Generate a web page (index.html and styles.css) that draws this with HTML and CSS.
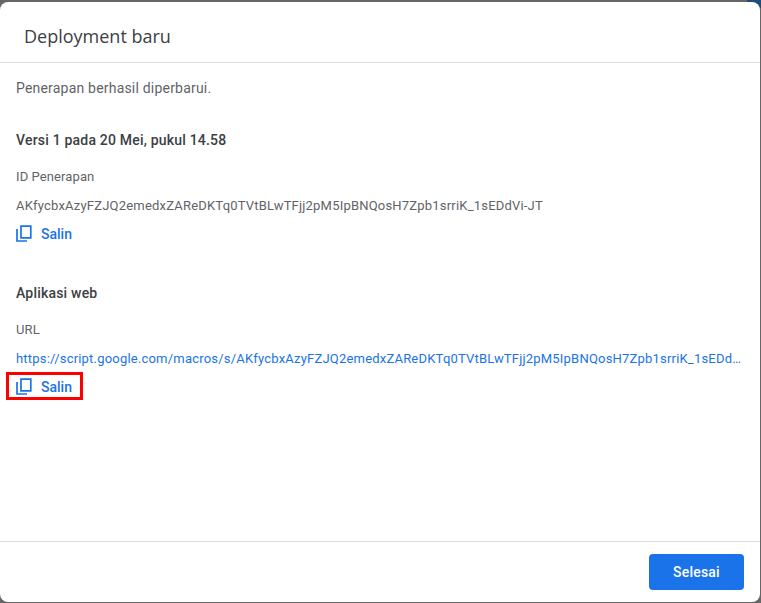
FILE: index.html
```html
<!DOCTYPE html>
<html lang="id">
<head>
<meta charset="utf-8">
<title>Deployment baru</title>
<link rel="stylesheet" href="styles.css">
</head>
<body>
<div class="dialog">
  <header class="head"><h1>Deployment baru</h1></header>
  <main class="body">
    <p class="status">Penerapan berhasil diperbarui.</p>
    <h2 class="version">Versi 1 pada 20 Mei, pukul 14.58</h2>
    <div class="label">ID Penerapan</div>
    <div class="value">AKfycbxAzyFZJQ2emedxZAReDKTq0TVtBLwTFjj2pM5IpBNQosH7Zpb1srriK_1sEDdVi-JT</div>
    <div class="copy-wrap">
      <button class="copy">
        <svg viewBox="0 0 16 17" width="16" height="17"><path d="M5 1.2h9.8v11.6H5z M1 4v12h10" fill="none" stroke="#1a73e8" stroke-width="1.7"/></svg>
        <span>Salin</span>
      </button>
    </div>
    <h2 class="app">Aplikasi web</h2>
    <div class="label">URL</div>
    <a class="url" href="#">https://script.google.com/macros/s/AKfycbxAzyFZJQ2emedxZAReDKTq0TVtBLwTFjj2pM5IpBNQosH7Zpb1srriK_1sEDdVi-JT/exec</a>
    <div class="copy-wrap">
      <button class="copy">
        <svg viewBox="0 0 16 17" width="16" height="17"><path d="M5 1.2h9.8v11.6H5z M1 4v12h10" fill="none" stroke="#1a73e8" stroke-width="1.7"/></svg>
        <span>Salin</span>
      </button>
      <div class="mark"></div>
    </div>
  </main>
  <footer class="foot"><button class="done">Selesai</button></footer>
</div>
</body>
</html>
```
FILE: styles.css
```css
* { box-sizing: border-box; }
html, body { margin: 0; height: 100%; }
body {
  background: linear-gradient(to bottom left, #1f4a80 60%, transparent 60%) no-repeat right top / 14px 8px, #666;
  font-family: Roboto, "Liberation Sans", sans-serif;
  overflow: hidden;
}
.dialog {
  width: 760px;
  height: 600px;
  margin-top: 2px;
  background: #fff;
  border-radius: 8px;
  display: flex;
  flex-direction: column;
}
.head {
  height: 61px;
  padding: 8px 24px 0;
  display: flex;
  align-items: center;
  border-bottom: 1px solid #dadce0;
  flex: none;
}
h1 {
  margin: 0;
  font-family: "Open Sans", sans-serif;
  font-size: 18px;
  font-weight: 400;
  color: #3c4043;
}
.body {
  flex: 1;
  padding: 0 16px;
  min-height: 0;
}
.status {
  margin: 17px 0 0;
  font-size: 14px;
  line-height: 16px;
  letter-spacing: 0.2px;
  color: #5f6368;
}
h2 {
  margin: 0;
  font-size: 14px;
  line-height: 16px;
  font-weight: 500;
  letter-spacing: 0.2px;
  color: #3c4043;
}
.version { margin-top: 36px; }
.app { margin-top: 43px; }
.label {
  margin-top: 21px;
  font-size: 13px;
  line-height: 16px;
  color: #5f6368;
  letter-spacing: 0.1px;
}
.value, .url {
  display: block;
  margin-top: 13px;
  font-size: 13px;
  line-height: 16px;
  white-space: nowrap;
  overflow: hidden;
  text-overflow: ellipsis;
  letter-spacing: 0.2px;
}
.value { color: #5f6368; }
.url { color: #1a73e8; text-decoration: none; }
.copy-wrap {
  position: relative;
  width: fit-content;
  padding-top: 11px;
}
.copy {
  margin: 0;
  padding: 0;
  height: 17px;
  border: 0;
  background: none;
  display: flex;
  align-items: center;
  gap: 9px;
  color: #1a73e8;
  font: 500 14px/16px Roboto, sans-serif;
}
.mark {
  position: absolute;
  left: -10px;
  top: 5px;
  width: 77px;
  height: 28px;
  border: 3px solid #f00;
}
.foot {
  flex: none;
  height: 61px;
  border-top: 1px solid #dadce0;
  padding: 12px 16px 0 0;
  display: flex;
  justify-content: flex-end;
  align-items: flex-start;
}
.done {
  width: 95px;
  height: 36px;
  border: 0;
  border-radius: 4px;
  background: #1a73e8;
  color: #fff;
  font: 500 14px/16px Roboto, sans-serif;
  letter-spacing: 0.2px;
}
```
